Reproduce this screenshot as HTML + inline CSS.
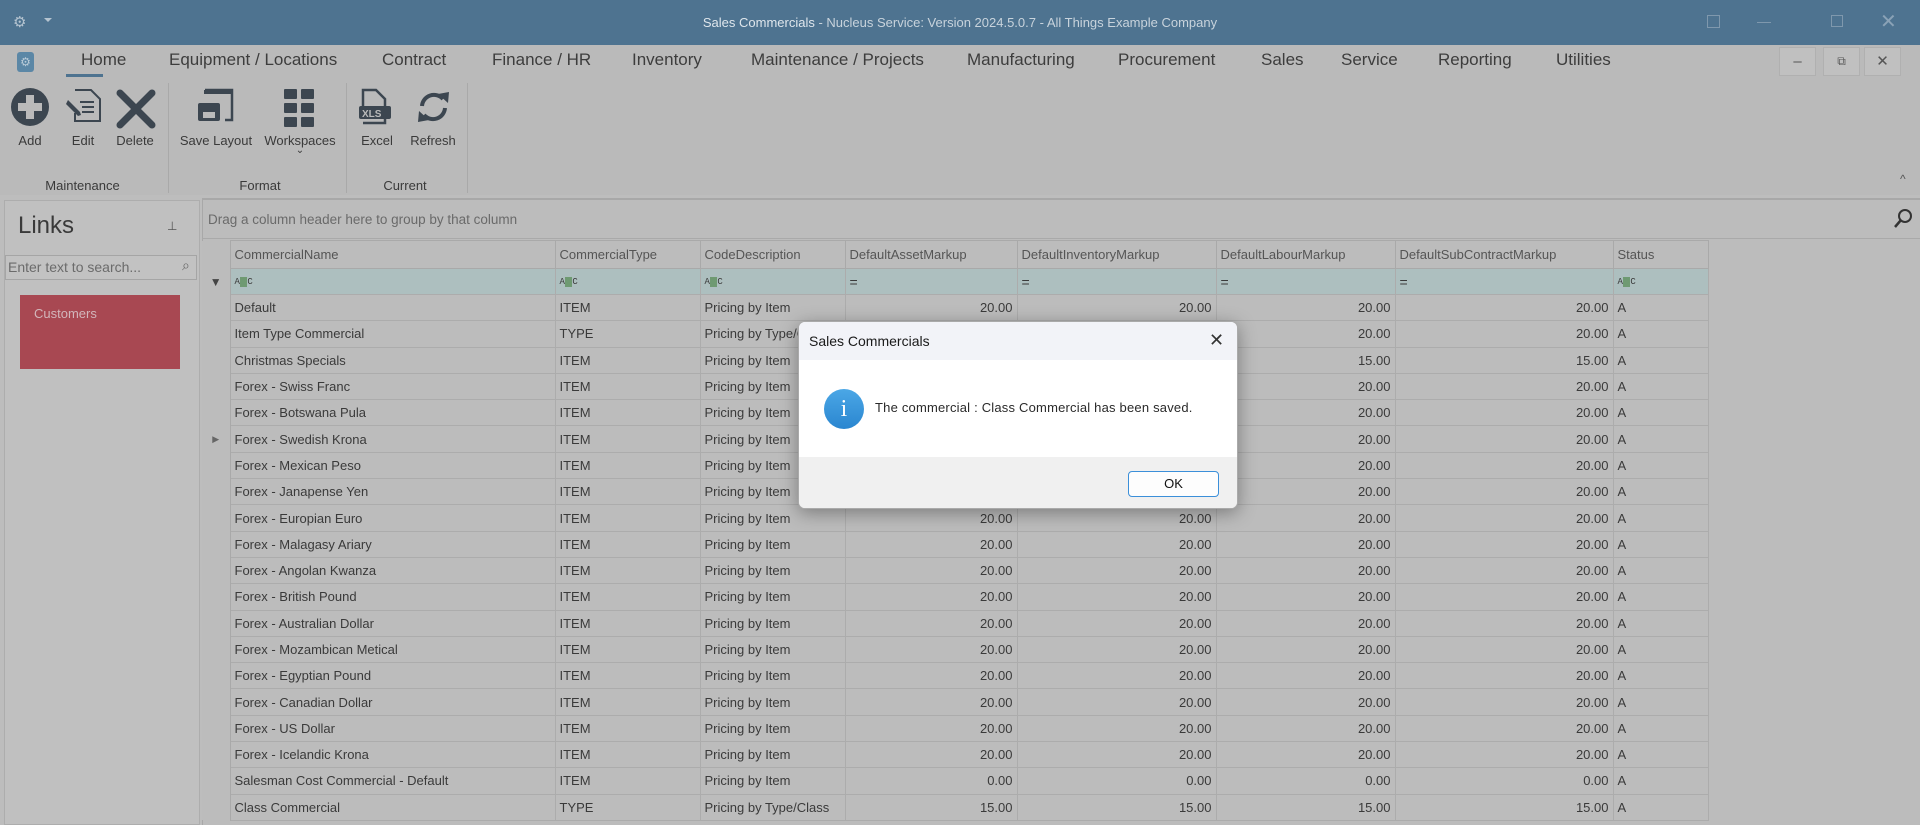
<!DOCTYPE html>
<html><head><meta charset="utf-8"><style>
*{box-sizing:border-box;margin:0;padding:0}
body{width:1920px;height:825px;overflow:hidden;background:#bdbdbd;font-family:"Liberation Sans",sans-serif;color:#3a3a3a;position:relative}
.abs{position:absolute}
#title{left:0;top:0;width:1920px;height:45px;background:#4e7390;color:#c8d3dc;font-size:13px;text-align:center;line-height:45px}
#title b{font-weight:normal;color:#dfe6ec}
.tab{position:absolute;top:50px;font-size:17px;color:#3d3d3d}
#ribbon{left:0;top:80px;width:1920px;height:115px;background:#bababa}
.lbl{position:absolute;font-size:13px;color:#3a3a3a;text-align:center}
.sep{position:absolute;top:83px;width:1px;height:110px;background:#a9a9a9}
.wb{position:absolute;top:47px;width:37px;height:29px;background:#c0c0c0;border:1px solid #b0b0b0;text-align:center;line-height:27px;font-size:15px;color:#555}
#links{left:4px;top:200px;width:196px;height:625px;background:#c0c0c0;border:1px solid #adadad}
#grid{left:202px;top:198px;width:1718px;height:627px;background:#bcbcbc;border-top:2px solid #a8a8a8;border-left:1px solid #a8a8a8}
table{position:absolute;left:202px;top:240px;border-collapse:collapse;font-size:13px;table-layout:fixed}
td{height:26.3px;border:1px solid #acacac;padding:0 4px;white-space:nowrap;overflow:hidden;color:#3a3a3a}
td.n{text-align:right}
tr.h td{height:28px;color:#555;background:#bcbcbc;border-color:#a9a9a9}
tr.f td{height:26px;background:#adbfbf;font-size:10px}
table tr td.i{border:none;background:#bcbcbc;border-right:1px solid #a9a9a9;padding:0}
.abc{display:inline-block;font-size:9px;font-family:"Liberation Mono",monospace}
.abc i{font-style:normal;background:#6f9a72;color:#6f9a72;padding:0 1px}
#dlg{left:798px;top:321px;width:440px;height:188px;background:#fff;border-radius:7px;box-shadow:0 4px 18px rgba(0,0,0,.35);overflow:hidden;border:1px solid #aaa}
</style></head><body>
<div id="title" class="abs"><b>Sales Commercials</b> - Nucleus Service: Version 2024.5.0.7 - All Things Example Company</div>
<div class="abs" style="left:13px;top:13px;color:#b5c4d0;font-size:15px">⚙</div>
<div class="abs" style="left:44px;top:18px;width:0;height:0;border-left:4px solid transparent;border-right:4px solid transparent;border-top:4px solid #b5c4d0"></div>
<div class="abs" style="left:1707px;top:15px;width:13px;height:13px;border:1px solid #7f98ad"></div>
<div class="abs" style="left:1757px;top:22px;width:14px;height:1px;background:#7f98ad"></div>
<div class="abs" style="left:1831px;top:15px;width:12px;height:12px;border:1px solid #7f98ad"></div>
<div class="abs" style="left:1880px;top:9px;color:#8aa2b6;font-size:20px">✕</div>
<div class="abs" style="left:0;top:45px;width:1920px;height:35px;background:#bababa"></div>
<div class="abs" style="left:17px;top:52px;width:17px;height:20px;background:#5b87a6;border-radius:3px;color:#b9cbd8;font-size:12px;text-align:center;line-height:20px">⚙</div>
<div class="tab" style="left:81px">Home</div>
<div class="abs" style="left:66px;top:74px;width:37px;height:3px;background:#4e7390"></div>
<div class="tab" style="left:169px">Equipment / Locations</div>
<div class="tab" style="left:382px">Contract</div>
<div class="tab" style="left:492px">Finance / HR</div>
<div class="tab" style="left:632px">Inventory</div>
<div class="tab" style="left:751px">Maintenance / Projects</div>
<div class="tab" style="left:967px">Manufacturing</div>
<div class="tab" style="left:1118px">Procurement</div>
<div class="tab" style="left:1261px">Sales</div>
<div class="tab" style="left:1341px">Service</div>
<div class="tab" style="left:1438px">Reporting</div>
<div class="tab" style="left:1556px">Utilities</div>
<div class="wb" style="left:1779px">–</div><div class="wb" style="left:1823px;font-size:12px">⧉</div><div class="wb" style="left:1864px">✕</div>
<div id="ribbon" class="abs"></div>
<svg class="abs" style="left:0;top:80px" width="480" height="80" fill="#3c4650">
<circle cx="30" cy="27" r="19"/><path d="M26 15h8v8h8v8h-8v8h-8v-8h-8v-8h8z" fill="#bababa"/>
<path d="M75 10h16l9 9v22h-25v-8" fill="none" stroke="#3c4650" stroke-width="2"/><path d="M80 22h14M82 27h12M82 32h12" stroke="#3c4650" stroke-width="2"/><path d="M66 24l12 12 3-1-1-3-12-12z"/>
<path d="M120 13l32 32M152 13l-32 32" stroke="#3c4650" stroke-width="7" stroke-linecap="round"/>
<path d="M205 10h27v30h-7" fill="none" stroke="#3c4650" stroke-width="2.5"/><rect x="204" y="10" width="28" height="4"/><rect x="198" y="23" width="22" height="18" rx="2"/><rect x="203" y="32" width="12" height="6" fill="#bababa"/>
<g><rect x="284" y="9" width="13" height="10" rx="1"/><rect x="301" y="9" width="13" height="10" rx="1"/><rect x="284" y="23" width="13" height="10" rx="1"/><rect x="301" y="23" width="13" height="10" rx="1"/><rect x="284" y="37" width="13" height="10" rx="1"/><rect x="301" y="37" width="13" height="10" rx="1"/></g>
<path d="M363 30v-20h13l9 9v24h-22" fill="none" stroke="#3c4650" stroke-width="2.5"/><rect x="359" y="26" width="32" height="13" rx="2"/><text x="362" y="37" font-size="10" font-weight="bold" fill="#bababa" font-family="Liberation Sans">XLS</text>
<path d="M422 26a12 12 0 0 1 21-7M445 28a12 12 0 0 1-21 7" fill="none" stroke="#3c4650" stroke-width="4"/><path d="M438 14l11-2-1 11zM429 40l-11 2 1-11z"/>
</svg>
<div class="lbl" style="left:10px;top:133px;width:40px">Add</div>
<div class="lbl" style="left:62px;top:133px;width:42px">Edit</div>
<div class="lbl" style="left:110px;top:133px;width:50px">Delete</div>
<div class="lbl" style="left:173px;top:133px;width:86px">Save Layout</div>
<div class="lbl" style="left:260px;top:133px;width:80px">Workspaces</div>
<div class="lbl" style="left:292px;top:145px;width:16px;font-size:10px">⌄</div>
<div class="lbl" style="left:356px;top:133px;width:42px">Excel</div>
<div class="lbl" style="left:405px;top:133px;width:56px">Refresh</div>
<div class="lbl" style="left:30px;top:178px;width:105px">Maintenance</div>
<div class="lbl" style="left:180px;top:178px;width:160px">Format</div>
<div class="lbl" style="left:345px;top:178px;width:120px">Current</div>
<div class="sep" style="left:168px"></div><div class="sep" style="left:346px"></div><div class="sep" style="left:467px"></div>
<div class="abs" style="left:1900px;top:172px;font-size:12px;color:#555">^</div>
<div id="links" class="abs"></div>
<div class="abs" style="left:18px;top:212px;font-size:24px;color:#3a3a3a">Links</div>
<div class="abs" style="left:167px;top:219px;font-size:12px;color:#555">⊥</div>
<div class="abs" style="left:5px;top:255px;width:192px;height:25px;border:1px solid #a5a5a5;background:#c2c2c2;font-size:14px;color:#6b6b6b;padding:3px 2px">Enter text to search...</div>
<div class="abs" style="left:182px;top:257px;font-size:14px;color:#666">⌕</div>
<div class="abs" style="left:20px;top:295px;width:160px;height:74px;background:#a84852;color:#d2b6bb;font-size:13px;padding:11px 14px">Customers</div>
<div id="grid" class="abs"></div>
<div class="abs" style="left:202px;top:238px;width:1718px;height:1px;background:#a9a9a9"></div>
<div class="abs" style="left:208px;top:212px;font-size:13.5px;color:#6a6a6a">Drag a column header here to group by that column</div>
<svg class="abs" style="left:1893px;top:208px" width="20" height="22"><circle cx="12" cy="8" r="6" fill="none" stroke="#333" stroke-width="2"/><path d="M8 12l-6 7" stroke="#333" stroke-width="2.5"/></svg>
<table>
<colgroup><col style="width:28px"><col style="width:325px"><col style="width:145px"><col style="width:145px"><col style="width:172px"><col style="width:199px"><col style="width:179px"><col style="width:218px"><col style="width:95px"></colgroup>
<tr class="h"><td class="i"></td><td>CommercialName</td><td>CommercialType</td><td>CodeDescription</td><td>DefaultAssetMarkup</td><td>DefaultInventoryMarkup</td><td>DefaultLabourMarkup</td><td>DefaultSubContractMarkup</td><td>Status</td></tr>
<tr class="f"><td class="i" style="text-align:center;font-size:12px;color:#444">▼</td><td><span class="abc">A<i>B</i>C</span></td><td><span class="abc">A<i>B</i>C</span></td><td><span class="abc">A<i>B</i>C</span></td><td style="font-size:14px">=</td><td style="font-size:14px">=</td><td style="font-size:14px">=</td><td style="font-size:14px">=</td><td><span class="abc">A<i>B</i>C</span></td></tr>
<tr><td class="i"></td><td>Default</td><td>ITEM</td><td>Pricing by Item</td><td class="n">20.00</td><td class="n">20.00</td><td class="n">20.00</td><td class="n">20.00</td><td>A</td></tr>
<tr><td class="i"></td><td>Item Type Commercial</td><td>TYPE</td><td>Pricing by Type/Class</td><td class="n">20.00</td><td class="n">20.00</td><td class="n">20.00</td><td class="n">20.00</td><td>A</td></tr>
<tr><td class="i"></td><td>Christmas Specials</td><td>ITEM</td><td>Pricing by Item</td><td class="n">15.00</td><td class="n">15.00</td><td class="n">15.00</td><td class="n">15.00</td><td>A</td></tr>
<tr><td class="i"></td><td>Forex - Swiss Franc</td><td>ITEM</td><td>Pricing by Item</td><td class="n">20.00</td><td class="n">20.00</td><td class="n">20.00</td><td class="n">20.00</td><td>A</td></tr>
<tr><td class="i"></td><td>Forex - Botswana Pula</td><td>ITEM</td><td>Pricing by Item</td><td class="n">20.00</td><td class="n">20.00</td><td class="n">20.00</td><td class="n">20.00</td><td>A</td></tr>
<tr><td class="i" style="text-align:center;font-size:9px;color:#666">▶</td><td>Forex - Swedish Krona</td><td>ITEM</td><td>Pricing by Item</td><td class="n">20.00</td><td class="n">20.00</td><td class="n">20.00</td><td class="n">20.00</td><td>A</td></tr>
<tr><td class="i"></td><td>Forex - Mexican Peso</td><td>ITEM</td><td>Pricing by Item</td><td class="n">20.00</td><td class="n">20.00</td><td class="n">20.00</td><td class="n">20.00</td><td>A</td></tr>
<tr><td class="i"></td><td>Forex - Janapense Yen</td><td>ITEM</td><td>Pricing by Item</td><td class="n">20.00</td><td class="n">20.00</td><td class="n">20.00</td><td class="n">20.00</td><td>A</td></tr>
<tr><td class="i"></td><td>Forex - Europian Euro</td><td>ITEM</td><td>Pricing by Item</td><td class="n">20.00</td><td class="n">20.00</td><td class="n">20.00</td><td class="n">20.00</td><td>A</td></tr>
<tr><td class="i"></td><td>Forex - Malagasy Ariary</td><td>ITEM</td><td>Pricing by Item</td><td class="n">20.00</td><td class="n">20.00</td><td class="n">20.00</td><td class="n">20.00</td><td>A</td></tr>
<tr><td class="i"></td><td>Forex - Angolan Kwanza</td><td>ITEM</td><td>Pricing by Item</td><td class="n">20.00</td><td class="n">20.00</td><td class="n">20.00</td><td class="n">20.00</td><td>A</td></tr>
<tr><td class="i"></td><td>Forex - British Pound</td><td>ITEM</td><td>Pricing by Item</td><td class="n">20.00</td><td class="n">20.00</td><td class="n">20.00</td><td class="n">20.00</td><td>A</td></tr>
<tr><td class="i"></td><td>Forex - Australian Dollar</td><td>ITEM</td><td>Pricing by Item</td><td class="n">20.00</td><td class="n">20.00</td><td class="n">20.00</td><td class="n">20.00</td><td>A</td></tr>
<tr><td class="i"></td><td>Forex - Mozambican Metical</td><td>ITEM</td><td>Pricing by Item</td><td class="n">20.00</td><td class="n">20.00</td><td class="n">20.00</td><td class="n">20.00</td><td>A</td></tr>
<tr><td class="i"></td><td>Forex - Egyptian Pound</td><td>ITEM</td><td>Pricing by Item</td><td class="n">20.00</td><td class="n">20.00</td><td class="n">20.00</td><td class="n">20.00</td><td>A</td></tr>
<tr><td class="i"></td><td>Forex - Canadian Dollar</td><td>ITEM</td><td>Pricing by Item</td><td class="n">20.00</td><td class="n">20.00</td><td class="n">20.00</td><td class="n">20.00</td><td>A</td></tr>
<tr><td class="i"></td><td>Forex - US Dollar</td><td>ITEM</td><td>Pricing by Item</td><td class="n">20.00</td><td class="n">20.00</td><td class="n">20.00</td><td class="n">20.00</td><td>A</td></tr>
<tr><td class="i"></td><td>Forex - Icelandic Krona</td><td>ITEM</td><td>Pricing by Item</td><td class="n">20.00</td><td class="n">20.00</td><td class="n">20.00</td><td class="n">20.00</td><td>A</td></tr>
<tr><td class="i"></td><td>Salesman Cost Commercial - Default</td><td>ITEM</td><td>Pricing by Item</td><td class="n">0.00</td><td class="n">0.00</td><td class="n">0.00</td><td class="n">0.00</td><td>A</td></tr>
<tr><td class="i"></td><td>Class Commercial</td><td>TYPE</td><td>Pricing by Type/Class</td><td class="n">15.00</td><td class="n">15.00</td><td class="n">15.00</td><td class="n">15.00</td><td>A</td></tr>
</table>
<div id="dlg" class="abs">
<div style="height:38px;background:#f2f3f8;font-size:14px;color:#1a1a1a;padding:11px 10px">Sales Commercials</div>
<div class="abs" style="left:410px;top:8px;font-size:18px;color:#333">✕</div>
<div style="height:97px;background:#fff;position:relative">
<div class="abs" style="left:25px;top:29px;width:40px;height:40px;border-radius:50%;background:linear-gradient(#4ba7e6,#2a86d0);color:#fff;text-align:center;font-size:24px;line-height:40px;font-family:'Liberation Serif',serif">i</div>
<div class="abs" style="left:76px;top:40px;font-size:13px;color:#2a2a2a;letter-spacing:.2px">The commercial : Class Commercial has been saved.</div>
</div>
<div style="height:53px;background:#f0f0f0;position:relative">
<div class="abs" style="left:329px;top:14px;width:91px;height:26px;border:1px solid #3b8fd9;border-radius:4px;background:#fdfdfd;text-align:center;line-height:24px;font-size:13px;color:#111">OK</div>
</div>
</div>
</body></html>
